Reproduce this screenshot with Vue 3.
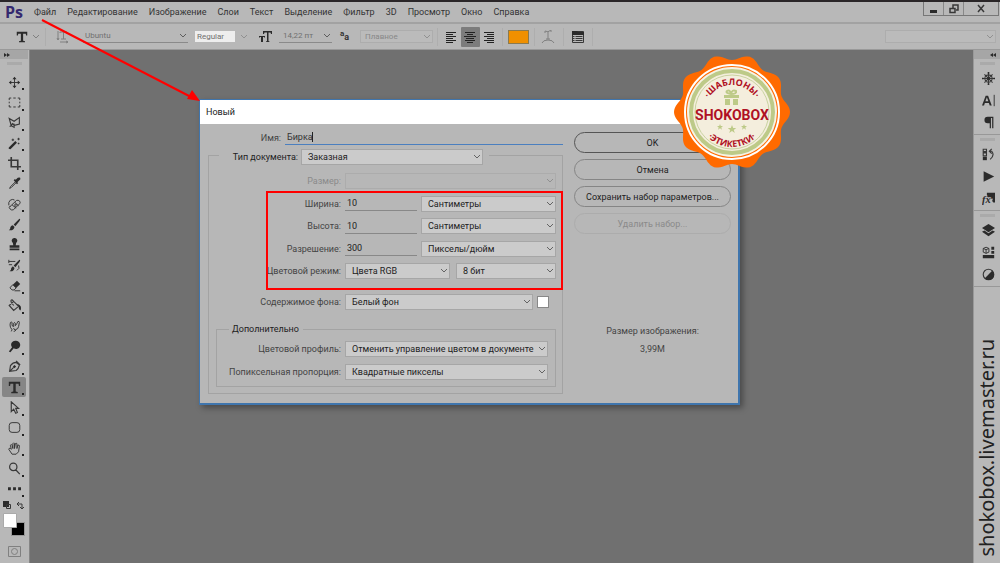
<script setup>
import { ref } from 'vue'

const menu = ['Файл', 'Редактирование', 'Изображение', 'Слои', 'Текст', 'Выделение', 'Фильтр', '3D', 'Просмотр', 'Окно', 'Справка']

const tools = [
  { name: 'Перемещение', s: 'M8 3v10M3 8h10', f: 'M8 1l2.500 3h-5zM8 15l2.500-3h-5zM1 8l3-2.500v5zM15 8l-3-2.500v5z' },
  { name: 'Прямоугольная область', s: 'M1.500 5V2.500H4M6.500 2.500h3M12 2.500h2.500V5M14.500 7v2M14.500 11v2.500H12M9.500 13.500h-3M4 13.500H1.500V11M1.500 9V7' },
  { name: 'Лассо', w: 1.400, s: 'M4 12L1.500 3l6 3.500L14 2v8l-6 1.500-2.500-2L4 12l-2 1M5.500 9.500l2 .5v4L4 12' },
  { name: 'Волшебная палочка', s: 'M6 2v3M4.500 3.500h3M13 1v3M11.500 2.500h3M13 7v2M12 8h2', f: 'M1 13l8-8 2 2-8 8q-3 0-2-2z' },
  { name: 'Рамка', w: 2, s: 'M4 0v12h12M0 4h12v12' },
  { name: 'Пипетка', s: 'M9 6l-6 6-1 2 2-1 6-6', f: 'M7 4l1.500-1.500 1 1L12 1q2-1 3 0 1 2-1 3l-2.500 2.500 1 1L11 9z' },
  { name: 'Восстанавливающая кисть', s: 'M2.500 10.500l8-7.500q2-1 4 1 1 2 0 3l-8 7.500q-2 1-4-1t0-3.500zM5 8.500l5 4M8.500 5.500l4.500 4M1 9Q0 5 3 2.500q3-1.500 5 0M8 8l2 1M9.500 7l1 2M7.500 9.500l2 1' },
  { name: 'Кисть', f: 'M14 1q2 0 0 3L9 10 7 8zM6 9l2 2q-1 5-7 4 2-1 2-4 1-2 3-2z' },
  { name: 'Штамп', f: 'M8 0a3.300 3.300 0 0 1 2 6l-.5 3H14v3H2V9h4.500L6 6a3.300 3.300 0 0 1 2-6zM2 13h12v2H2z' },
  { name: 'Архивная кисть', s: 'M1 3h4M1 1v4M5 3h4M1 7h4M13 8q2 4-2 6', f: 'M14 1q2 0 0 3L9 10 7 8zM6 9l2 2q-1 5-6 4 2-1 2-4z' },
  { name: 'Ластик', s: 'M3 10l3-3 4 4-2.500 2.500H5L2.500 11zM8 14.500h7', f: 'M6 7l5-5 4 4-5 5z' },
  { name: 'Заливка', w: 1.400, s: 'M1.500 8L7 3l6 6-6 5zM7 8L4 4q-1-3 1-3l2 2', f: 'M11 6q5 1 5 5 0 3-1 3-2-1-2-5z' },
  { name: 'Палец', s: 'M4 14l1-2-2-3q-1-3 0-6 1-1 2 0v3q0 2 2 2V4q1-2 2 0v3q2-2 3-5 2-1 2 1l-1 5q0 3-4 4-2 0-2-2M7 14q2 0 3-2' },
  { name: 'Затемнитель', f: 'M10 1a5 5 0 1 1-3 9l-4 5-2-1 4-5a5 5 0 0 1 5-8z' },
  { name: 'Перо', w: 1.400, s: 'M2 14l1-7q3-4 7-4l4 3q-1 5-4 7zM2 14l5-5M10 1l5 5', f: 'M8 6l2 2-2 2-2-2z' },
  { name: 'Текст', f: 'M1 1h14v5h-1.500L13 3.500H9.500v9.500l2.500.5V15H4v-1.500l2.500-.5V3.500H3L2.500 6H1z', active: true },
  { name: 'Выделение контура', w: 1.400, s: 'M4 1v12l3-3 2.500 5 2-1L9.500 9H13z' },
  { name: 'Прямоугольник со скруглёнными углами', s: 'M5 2h6q3.500 0 3.500 3.500v5Q14.500 14 11 14H5q-3.500 0-3.500-3.500v-5Q1.500 2 5 2z' },
  { name: 'Рука', s: 'M5 15L1 9q0-2 2-1l1 1-1-5q1-2 2 0l1 4V2q1-2 2 0v6l1-6q1-1 2 0v6l1-4q2-1 2 1l-1 7-3 3z' },
  { name: 'Масштаб', w: 1.500, s: 'M11 6a4.500 4.500 0 1 1-9 0 4.500 4.500 0 0 1 9 0zM9.500 9.500L14.500 15' },
  { name: 'Другие инструменты', f: 'M0 6.500h3.500V10H0zM6.250 6.500h3.500V10h-3.500zM12.500 6.500H16V10h-3.500z' }
]

const panels = [
  [
    { name: 'Навигатор', w: 1.400, s: 'M8 1v14M1 8h14M3 3l10 10M13 3L3 13M12.500 8a4.500 4.500 0 1 1-9 0 4.500 4.500 0 0 1 9 0z', f: 'M7 0h2v2H7zM7 14h2v2H7zM0 7h2v2H0zM14 7h2v2h-2zM6.500 6.500h3v3h-3z' },
    { name: 'Символ', s: 'M15 1v14', f: 'M0 14L4.500 2h3L12 14h-2.500L8.500 11h-5l-1 3zM4.200 9h3.600L6 4z' },
    { name: 'Абзац', f: 'M7 1h7v14h-1.500V2.500H11V15H9.500V9H7Q3 9 3 5t4-4z' }
  ],
  [
    { name: 'История', w: 1.400, s: 'M1.500 1.500h4v3h-4zM1.500 6h4v3.500h-4zM9 4h3q4 5-2 10M12 1L9 4l3 3', f: 'M1 10.500h5V15H1z' },
    { name: 'Операции', f: 'M2 1.500L15 8 2 14.500z' },
    { name: 'Стили', fx: true, f: 'M6 1h10v12h-2l-1.500-2 1-3-3 1L9 7H6z' }
  ],
  [
    { name: 'Слои', f: 'M8 0l8 5-8 5-8-5zM0 9.500L3 8l5 3.500L13 8l3 1.500-8 5.500z' },
    { name: '3D', s: 'M1.500 3L5 1.500 8.500 3v4.500L5 9 1.500 7.500zM1.500 3L5 4.500 8.500 3M5 4.500V9', f: 'M11.500 1H15v3.500h-3.500zM11.500 6H15v3.500h-3.500zM1 11h14v4H1z' },
    { name: 'Коррекция', w: 1.400, s: 'M14.500 8a6.500 6.500 0 1 1-13 0 6.500 6.500 0 0 1 13 0z', f: 'M12.500 3.500A6.400 6.400 0 1 1 3.500 12.500z' }
  ]
]

const name = ref('Бирка')
const width = ref('10')
const height = ref('10')
const resolution = ref('300')

const lobes = 10
const badgeOutline = Array.from({ length: 180 }, (_, i) => {
  const a = (i * Math.PI) / 90
  const r = 55 + 3 * Math.cos(lobes * a)
  return `${(60 + r * Math.cos(a)).toFixed(2)},${(60 + r * Math.sin(a)).toFixed(2)}`
}).join(' ')
</script>

<template>
  <div class="app">
    <header class="menubar">
      <span class="logo">Ps</span>
      <nav class="menu">
        <a v-for="m in menu" :key="m" href="#">{{ m }}</a>
      </nav>
      <div class="winbtns">
        <button aria-label="Свернуть"><svg width="12" height="12"><path d="M2 7h7v3H2z" class="fill" /></svg></button>
        <button aria-label="Восстановить"><svg width="12" height="12"><path d="M2 5.500h5v4H2zM5 5V2h5v5H8" class="line bold" /></svg></button>
        <button class="wide" aria-label="Закрыть"><svg width="12" height="12"><path d="M3 2l6 7M9 2L3 9" class="line bold" /></svg></button>
      </div>
    </header>

    <div class="options">
      <button class="tool-t" aria-label="Инструмент Текст">
        <svg width="12" height="12" viewBox="0 0 16 16"><path :d="tools[15].f" class="fill" /></svg>
        <svg width="6" height="4"><path d="M0 0l3 3 3-3" class="line faint" /></svg>
      </button>
      <i class="sep"></i>
      <button class="icon orient" aria-label="Ориентация текста">
        <svg width="14" height="14"><path d="M2 1v9M1 8l1 2 1-2M4 3V2h7v2M7.500 2v7M5 9h5M4 12h8M10 11l2 1-2 1" class="line faint" /></svg>
      </button>
      <span class="pick under font"><select aria-label="Гарнитура"><option>Ubuntu</option></select><svg width="6" height="4"><path d="M0 0l3 3 3-3" class="line" /></svg></span>
      <span class="pick style"><select aria-label="Начертание"><option>Regular</option></select><svg width="6" height="4"><path d="M0 0l3 3 3-3" class="line faint" /></svg></span>
      <svg class="tt" width="14" height="14"><path d="M4 1h9v3h-1l-.5-1.500h-2V11l1 .5V12H7v-.5l1-.5V2.500H5.500L5 4H4zM0 6h6v2l-1-1H4v5H2V7H1L0 8z" class="fill" /></svg>
      <span class="pick under size"><select aria-label="Кегль"><option>14,22 пт</option></select><svg width="6" height="4"><path d="M0 0l3 3 3-3" class="line" /></svg></span>
      <span class="aa"><sup>a</sup>a</span>
      <span class="pick boxed smooth"><select aria-label="Сглаживание"><option>Плавное</option></select><svg width="6" height="4"><path d="M0 0l3 3 3-3" class="line faint" /></svg></span>
      <i class="sep"></i>
      <div class="aligns">
        <button aria-label="По левому краю"><svg width="12" height="12"><path d="M1 1.500h10M1 3.500h7M1 5.500h10M1 7.500h7M1 9.500h10M1 11.500h7" class="line strong" /></svg></button>
        <button class="on" aria-label="По центру"><svg width="12" height="12"><path d="M1 1.500h10M3 3.500h6M0 5.500h12M2 7.500h8M1 9.500h10M3 11.500h6" class="line strong" /></svg></button>
        <button aria-label="По правому краю"><svg width="12" height="12"><path d="M1 1.500h10M4 3.500h7M1 5.500h10M4 7.500h7M1 9.500h10M4 11.500h7" class="line strong" /></svg></button>
      </div>
      <i class="sep"></i>
      <button class="colour" aria-label="Цвет текста"></button>
      <i class="sep"></i>
      <button class="icon warp" aria-label="Деформация"><svg width="14" height="14"><path d="M4 3V1q3 2 6-1v2M7 2v7M5 9h4M1 13q1-3 6-3t6 3" class="line faint" /></svg></button>
      <i class="sep"></i>
      <button class="icon" aria-label="Панели"><svg width="14" height="14"><path d="M1.500 1.500h11v11h-11zM4.500 6.500h7M4.500 8.500h7M4.500 10.500h7M2 6.500h1.500M2 8.500h1.500M2 10.500h1.500" class="line" /><path d="M1 1h5l1 1h6v3H1z" class="fill" /></svg></button>
      <i class="sep"></i>
      <span class="pick boxed workspace"><select aria-label="Рабочая среда"><option></option></select><svg width="6" height="4"><path d="M0 0l3 3 3-3" class="line faint" /></svg></span>
    </div>

    <div class="work">
      <aside class="toolbar">
        <div class="tab"><svg width="8" height="6"><path d="M1 1l3 2-3 2zM4 1l3 2-3 2z" class="fill" /></svg></div>
        <i class="grip"></i>
        <div class="tools">
          <button v-for="t in tools" :key="t.name" :aria-label="t.name" :class="{ on: t.active }">
            <svg width="13" height="13" viewBox="0 0 16 16">
              <path v-if="t.s" :d="t.s" class="line" :stroke-width="t.w || 1.200" />
              <path v-if="t.f" :d="t.f" class="fill" />
            </svg>
            <i class="more"></i>
          </button>
        </div>
        <svg class="swap" width="22" height="10"><path d="M0 0h6v6H0z" class="fill" /><path d="M3.500 3.500h4v4h-4zM15 3h4v4M16 1l-2 2 2 2M17 6l2 2 2-2" class="line" /></svg>
        <svg class="colours" width="24" height="25"><path d="M9.500 10.500h13v13h-13z" fill="#000" stroke="#999" /><path d="M1.500 1.500h13v14h-13z" fill="#fff" stroke="#aaa" /></svg>
        <button class="mask" aria-label="Быстрая маска"><svg width="13" height="11"><path d="M.5.500h12v10H.500z" class="line faint" /><circle cx="6.500" cy="5.500" r="3" class="line faint" /></svg></button>
      </aside>

      <main class="canvas"></main>

      <aside class="dock">
        <div class="tab end"><svg width="8" height="6"><path d="M4 1L1 3l3 2zM7 1L4 3l3 2z" class="fill" /></svg></div>
        <div v-for="(g, i) in panels" :key="i" class="group">
          <i class="grip"></i>
          <button v-for="p in g" :key="p.name" :aria-label="p.name">
            <svg width="13" height="13" viewBox="0 0 16 16">
              <path v-if="p.s" :d="p.s" class="line" :stroke-width="p.w || 1.200" />
              <path v-if="p.f" :d="p.f" class="fill" />
              <text v-if="p.fx" x="0" y="13" class="fx">fx</text>
            </svg>
          </button>
        </div>
        <div class="watermark">shokobox.livemaster.ru</div>
      </aside>
    </div>

    <section class="dialog" role="dialog" aria-labelledby="dlg-title">
      <h1 id="dlg-title">Новый</h1>
      <div class="body">
        <form class="form" @submit.prevent>
          <div class="namerow">
            <label for="doc-name">Имя:</label>
            <span class="namebox"><input id="doc-name" v-model="name" /><i class="caret"></i></span>
          </div>
          <fieldset class="outer">
            <legend>
              <label for="doc-type">Тип документа:</label>
              <span class="pick ctl type"><select id="doc-type"><option>Заказная</option></select><svg width="6" height="4"><path d="M0 0l3 3 3-3" class="line" /></svg></span>
            </legend>
            <div class="rows">
              <div class="row off">
                <label for="preset">Размер:</label>
                <span class="pick ctl full"><select id="preset" disabled><option></option></select><svg width="6" height="4"><path d="M0 0l3 3 3-3" class="line" /></svg></span>
              </div>
              <div class="row">
                <label for="w">Ширина:</label>
                <input id="w" v-model="width" />
                <span class="pick ctl unit"><select aria-label="Единицы ширины"><option>Сантиметры</option></select><svg width="6" height="4"><path d="M0 0l3 3 3-3" class="line" /></svg></span>
              </div>
              <div class="row">
                <label for="h">Высота:</label>
                <input id="h" v-model="height" />
                <span class="pick ctl unit"><select aria-label="Единицы высоты"><option>Сантиметры</option></select><svg width="6" height="4"><path d="M0 0l3 3 3-3" class="line" /></svg></span>
              </div>
              <div class="row">
                <label for="res">Разрешение:</label>
                <input id="res" v-model="resolution" />
                <span class="pick ctl unit"><select aria-label="Единицы разрешения"><option>Пикселы/дюйм</option></select><svg width="6" height="4"><path d="M0 0l3 3 3-3" class="line" /></svg></span>
              </div>
              <div class="row">
                <label for="mode">Цветовой режим:</label>
                <span class="pick ctl mode"><select id="mode"><option>Цвета RGB</option></select><svg width="6" height="4"><path d="M0 0l3 3 3-3" class="line" /></svg></span>
                <span class="pick ctl depth"><select aria-label="Глубина цвета"><option>8 бит</option></select><svg width="6" height="4"><path d="M0 0l3 3 3-3" class="line" /></svg></span>
              </div>
            </div>
            <div class="row content">
              <label for="bg">Содержимое фона:</label>
              <span class="pick ctl"><select id="bg"><option>Белый фон</option></select><svg width="6" height="4"><path d="M0 0l3 3 3-3" class="line" /></svg></span>
              <button class="bgcolour" type="button" aria-label="Цвет фона"></button>
            </div>
            <fieldset class="inner">
              <legend>Дополнительно</legend>
              <div class="row">
                <label for="profile">Цветовой профиль:</label>
                <span class="pick ctl"><select id="profile"><option>Отменить управление цветом в документе</option></select><svg width="6" height="4"><path d="M0 0l3 3 3-3" class="line" /></svg></span>
              </div>
              <div class="row">
                <label for="aspect">Попиксельная пропорция:</label>
                <span class="pick ctl"><select id="aspect"><option>Квадратные пикселы</option></select><svg width="6" height="4"><path d="M0 0l3 3 3-3" class="line" /></svg></span>
              </div>
            </fieldset>
          </fieldset>
        </form>
        <div class="side">
          <button class="pill main">OK</button>
          <button class="pill">Отмена</button>
          <button class="pill">Сохранить набор параметров...</button>
          <button class="pill" disabled>Удалить набор...</button>
          <p class="info">Размер изображения:<br />3,99M</p>
        </div>
      </div>
      <div class="highlight"></div>
    </section>

    <svg class="arrow" width="170" height="92">
      <path d="M2 1L151 78" stroke="#f00" stroke-width="2" />
      <path d="M160 82L147 80l5-9z" fill="#f00" />
    </svg>

    <svg class="badge" width="120" height="120" role="img" aria-label="SHOKOBOX">
      <polygon :points="badgeOutline" fill="#ff6a00" />
      <circle cx="60" cy="60" r="47" fill="#ff6a00" stroke="#fff" stroke-width="2" />
      <circle cx="60" cy="60" r="45" fill="#f5f3e4" />
      <circle cx="60" cy="60" r="41" fill="#f4eedd" stroke="#bdca88" stroke-width="4" />
      <circle cx="60" cy="60" r="37" fill="none" stroke="#c9d3a0" stroke-width="1" />
      <path id="arc-top" d="M33 60a27 27 0 0 1 54 0" fill="none" />
      <path id="arc-bottom" d="M25 60a35 35 0 0 0 70 0" fill="none" />
      <text class="ring"><textPath href="#arc-top" startOffset="50%">·ШАБЛОНЫ·</textPath></text>
      <text class="ring"><textPath href="#arc-bottom" startOffset="50%">·ЭТИКЕТКИ·</textPath></text>
      <path d="M52 43h15v3H52zM53 47h5v6h-5zM61 47h5v6h-5z" fill="#bdca88" />
      <path d="M59 42q-6-1-4-3 3-2 4 3 1-5 5-3 1 3-5 3z" fill="none" stroke="#bdca88" stroke-width="2" />
      <text x="60" y="68" class="brand">SHOKOBOX</text>
      <path d="M60 73l1.200 3h3l-2.400 2 1 3-2.800-2-2.800 2 1-3-2.400-2h3z" fill="#bdca88" />
      <path d="M48 72l.8 2h2.200l-1.700 1.500.7 2.300-2-1.500-2 1.500.7-2.300L45 74h2.200zM72 72l.8 2h2.200l-1.700 1.500.7 2.300-2-1.500-2 1.500.7-2.300L69 74h2.200z" fill="#bdca88" />
    </svg>
  </div>
</template>

<style>
html, body { margin: 0; background: #707070; }
</style>

<style scoped>
.app {
  position: relative;
  display: flex;
  flex-direction: column;
  min-height: 100vh;
  overflow: hidden;
  font: 9px/12px Roboto, "Noto Sans", sans-serif;
  color: #333;
  background: #707070;
}
.app *, .app *::before { box-sizing: border-box; }
button, input, select { font: inherit; color: inherit; margin: 0; padding: 0; border: 0; background: none; border-radius: 0; outline: 0; min-width: 0; }
button { display: flex; align-items: center; justify-content: center; }
svg { display: block; flex: none; }
.line { fill: none; stroke: #383838; }
.bold { stroke-width: 1.5; }
.fill { fill: #2b2b2b; }
.faint { stroke: #808080; }
.strong { stroke: #222; }

.menubar { display: flex; align-items: center; height: 24px; border-top: 2px solid #2a2628; border-bottom: 2px solid #a2a2a2; background: #b8b8b8; }
.logo { width: 34px; padding-left: 5px; font: bold 16px/20px "Open Sans", sans-serif; color: #35296f; }
.menu { display: flex; gap: 11px; }
.menu a { color: #333; text-decoration: none; }
.winbtns { display: flex; margin-left: auto; margin-right: 1px; align-self: flex-start; border: 1px solid #777; border-top: 0; }
.winbtns button { width: 20px; height: 13px; border-right: 1px solid #888; }
.winbtns .wide { width: 34px; border-right: 0; }

.options { display: flex; align-items: center; height: 26px; padding: 0 4px 0 16px; background: #b8b8b8; border-bottom: 1px solid #999; color: #707070; font-size: 8px; }
.sep { flex: none; width: 1px; height: 18px; background: #aeaeae; }
.tool-t { gap: 5px; width: 29px; justify-content: flex-start; }
.icon { width: 28px; height: 20px; }
.orient { width: 37px; padding-right: 4px; }
.warp { padding-right: 3px; }
.pick { position: relative; display: flex; align-items: center; min-width: 0; }
.pick select { appearance: none; width: 100%; height: 100%; }
.pick svg { position: absolute; right: 2px; opacity: .7; pointer-events: none; }
.under { height: 13px; border-bottom: 1px solid #8a8a8a; }
.font { width: 105px; }
.font select { padding-left: 2px; }
.style { width: 54px; height: 11px; margin-left: 7px; padding-right: 14px; }
.style select { background: #eee; padding-left: 2px; }
.tt { margin-left: 10px; }
.size { width: 53px; margin-left: 6px; }
.size select { padding-left: 4px; }
.aa { width: 20px; margin-left: 8px; font: bold 9px/12px Roboto, sans-serif; color: #333; }
.aa sup { font-size: 8px; line-height: 0; }
.boxed { height: 13px; border: 1px solid #adadad; background: #bbb; color: #888; }
.smooth { width: 73px; margin-right: 4px; }
.smooth select { padding-left: 4px; }
.aligns { display: flex; width: 64px; justify-content: center; }
.aligns button { width: 19px; height: 20px; }
.aligns .on { background: #7c7c7c; border-radius: 1px; }
.colour { width: 21px; height: 14px; margin: 0 5px; border: 1px solid #8a7a50; background: #f09000; }
.workspace { width: 111px; margin-left: auto; }

.work { display: flex; flex: 1; }
.toolbar, .dock { display: flex; flex-direction: column; flex: none; background: #b8b8b8; }
.toolbar { width: 30px; border-right: 1px solid #858585; align-items: center; padding-right: 1px; }
.canvas { flex: 1; background: #707070; }
.dock { width: 27px; border-left: 1px solid #999; }
.tab { display: flex; align-items: center; align-self: stretch; height: 9px; padding: 0 3px; background: #a6a6a6; }
.end { justify-content: flex-end; }
.grip { flex: none; width: 15px; height: 3px; margin: 3px auto; background: #aaa; }
.tools { display: flex; flex-direction: column; width: 100%; height: 427px; margin-top: 4px; }
.tools button { position: relative; flex: 1; margin: 0 2px; }
.tools .on { background: #868686; border-radius: 2px; }
.more { position: absolute; right: 2px; bottom: 2px; width: 2px; height: 2px; background: #222; }
.swap { margin-top: 2px; }
.colours { margin-top: 1px; }
.mask { margin-top: 9px; }
.group { display: flex; flex-direction: column; border-bottom: 1px solid #989898; padding-bottom: 1px; }
.group button { height: 22px; padding-left: 2px; }
.group .grip { margin-bottom: 2px; }
.fx { font: italic bold 13px "Liberation Serif", serif; fill: #2b2b2b; stroke: #b8b8b8; stroke-width: 2px; paint-order: stroke; }
.watermark { margin: auto 1px 6px auto; writing-mode: vertical-rl; transform: rotate(180deg); font: 20px/24px "Noto Sans", sans-serif; color: #222; white-space: nowrap; }

.dialog { position: absolute; left: 199px; top: 99px; width: 541px; border: 2px solid #3f75ad; border-top-width: 1px; border-left-width: 1px; background: #b7b7b7; box-shadow: 3px 3px 6px rgba(0, 0, 0, .35); }
.dialog h1 { margin: 0; height: 24px; padding-left: 6px; background: #fff; font: inherit; line-height: 24px; color: #222; }
.body { display: flex; gap: 11px; padding: 6px 7px 9px 8px; }
.form { flex: 1; min-width: 0; }
.namerow { display: flex; gap: 4px; }
.namerow label { width: 73px; text-align: right; line-height: 16px; color: #444; }
.namebox { position: relative; flex: 1; height: 15px; border-bottom: 1px solid #4b7fbf; }
.namebox input { width: 100%; height: 100%; padding-left: 2px; }
.caret { position: absolute; left: 27px; top: 2px; width: 1px; height: 10px; background: #222; }
fieldset { min-width: 0; margin: 0; padding: 0; border: 1px solid #a3a3a3; }
.outer { padding: 0 6px 6px 7px; }
.outer > legend { display: flex; align-items: center; margin-left: 3px; padding: 3px 6px 0 0; gap: 3px; color: #222; }
.outer > legend label { width: 79px; text-align: right; white-space: nowrap; }
.ctl { height: 16px; flex: 1; border: 1px solid #a6a6a6; background: #cbcbcb; color: #222; }
.ctl select { padding-left: 6px; }
.type { flex: none; width: 182px; }
.rows { display: flex; flex-direction: column; justify-content: space-between; height: 106px; margin-top: 8px; }
.row { display: flex; align-items: center; gap: 4px; height: 16px; }
.row label { flex: none; width: 125px; text-align: right; color: #444; }
.row input { width: 72px; height: 15px; border-bottom: 1px solid #888; padding-left: 2px; color: #222; }
.row.off label { color: #8a8a8a; }
.off .ctl { background: #b7b7b7; border-color: #acacac; }
.off svg { opacity: .3; }
.mode { flex: none; width: 105px; }
.depth { margin-left: 2px; }
.content { margin-top: 15px; padding-right: 7px; }
.bgcolour { flex: none; width: 12px; height: 12px; border: 1px solid #888; background: #fff; }
.inner { margin-top: 13px; padding: 6px 7px 6px 0; }
.inner legend { margin-left: 12px; padding: 0 4px 0 3px; color: #222; }
.inner .row + .row { margin-top: 7px; }
.inner .row label { width: 124px; }
.side { width: 157px; display: flex; flex-direction: column; gap: 6px; padding-top: 2px; }
.pill { height: 21px; border: 1px solid #858585; border-radius: 11px; color: #222; }
.main { border-color: #555; }
.pill:disabled { color: #8a8a8a; border-color: #acacac; }
.info { margin: 82px 0 0; text-align: center; line-height: 18px; color: #444; }
.highlight { position: absolute; left: 66px; top: 91px; width: 297px; height: 99px; border: 2px solid #f00; pointer-events: none; }

.arrow { position: absolute; left: 40px; top: 19px; pointer-events: none; }
.badge { position: absolute; left: 672px; top: 52px; }
.ring { font: bold 9px "Open Sans", sans-serif; fill: #b01124; text-anchor: middle; }
.brand { font: bold 14px Roboto, sans-serif; fill: #b01124; text-anchor: middle; }
</style>
